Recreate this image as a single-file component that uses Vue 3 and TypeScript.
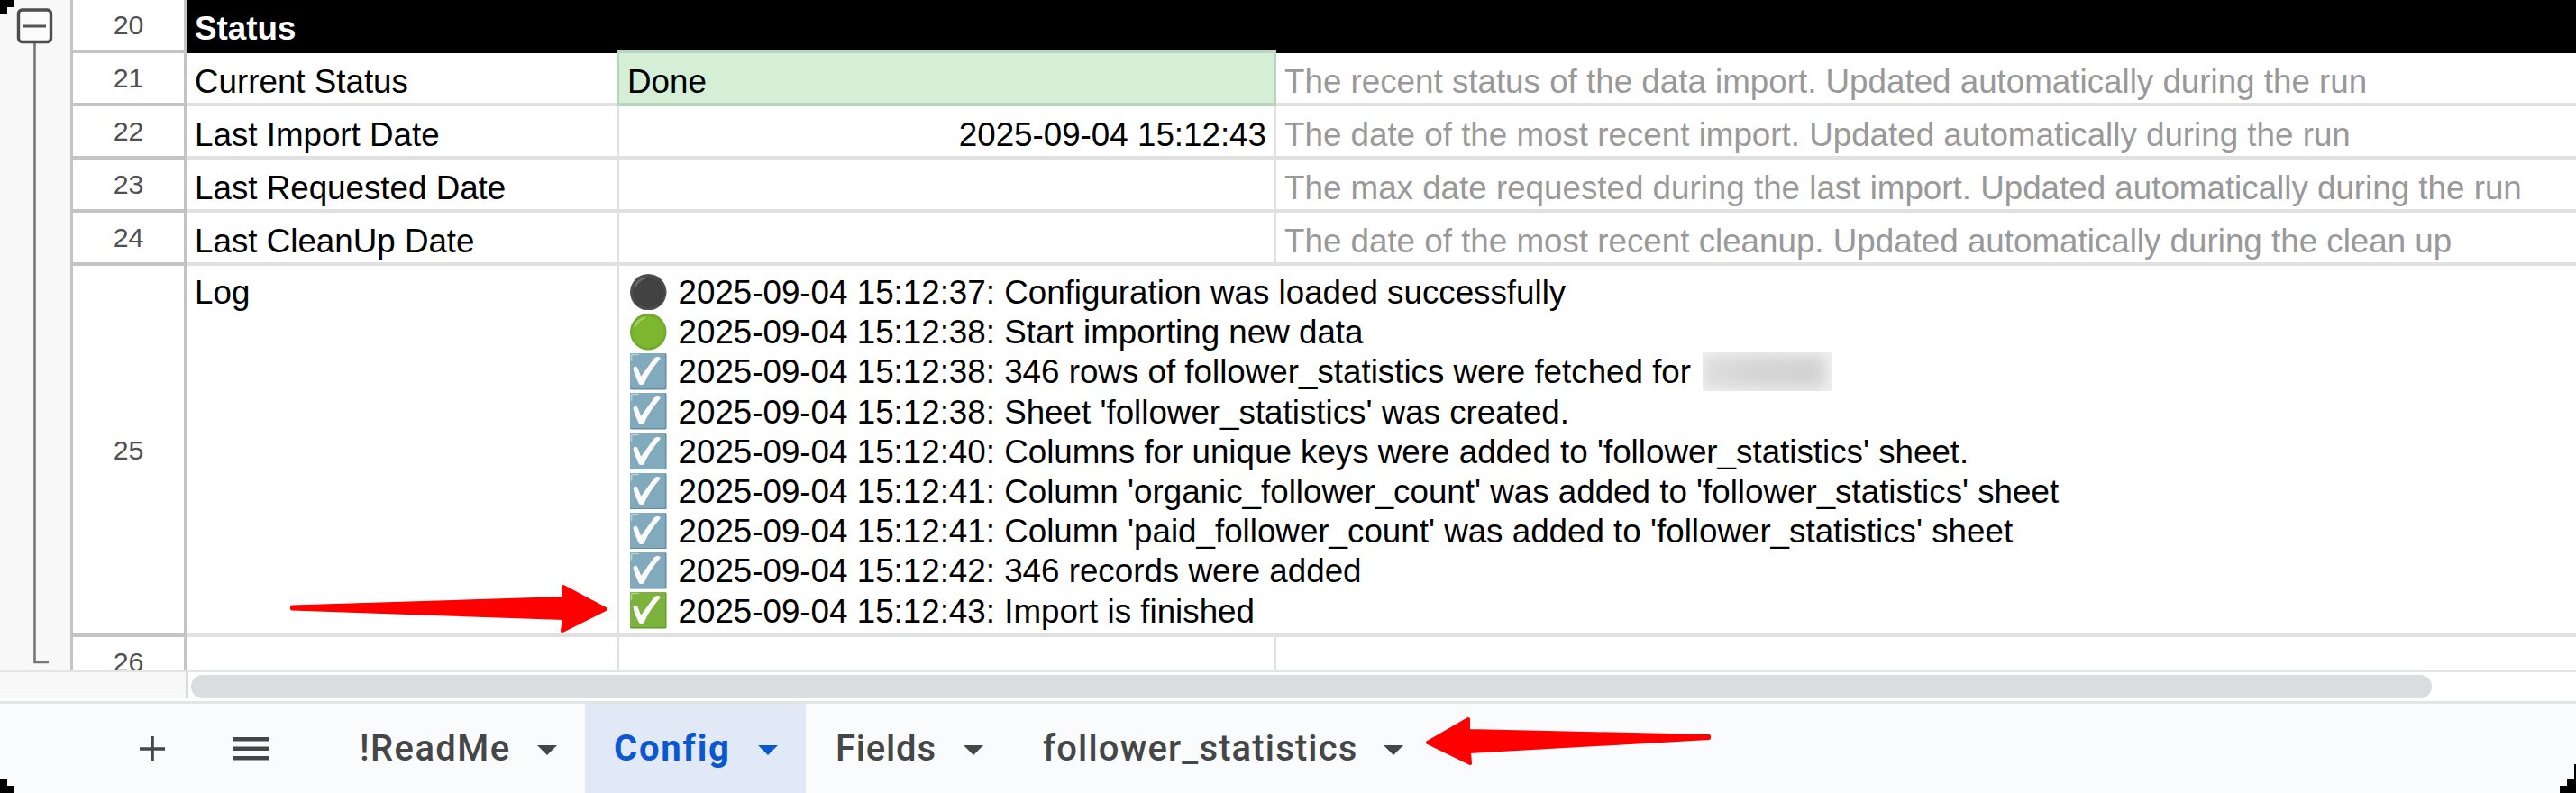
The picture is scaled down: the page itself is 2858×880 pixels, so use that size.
<script setup lang="ts">
interface Row { n: number; label: string; value?: string; note?: string; kind?: string }
interface LogLine { icon: 'dark' | 'green' | 'blue' | 'done'; text: string; redacted?: boolean }
interface Tab { name: string; key: string; active?: boolean }

const rows: Row[] = [
  { n: 21, label: 'Current Status', value: 'Done', note: 'The recent status of the data import. Updated automatically during the run', kind: 'done' },
  { n: 22, label: 'Last Import Date', value: '2025-09-04 15:12:43', note: 'The date of the most recent import. Updated automatically during the run', kind: 'right' },
  { n: 23, label: 'Last Requested Date', note: 'The max date requested during the last import. Updated automatically during the run' },
  { n: 24, label: 'Last CleanUp Date', note: 'The date of the most recent cleanup. Updated automatically during the clean up' },
]
const log: LogLine[] = [
  { icon: 'dark', text: '2025-09-04 15:12:37: Configuration was loaded successfully' },
  { icon: 'green', text: '2025-09-04 15:12:38: Start importing new data' },
  { icon: 'blue', text: '2025-09-04 15:12:38: 346 rows of follower_statistics were fetched for', redacted: true },
  { icon: 'blue', text: "2025-09-04 15:12:38: Sheet 'follower_statistics' was created." },
  { icon: 'blue', text: "2025-09-04 15:12:40: Columns for unique keys were added to 'follower_statistics' sheet." },
  { icon: 'blue', text: "2025-09-04 15:12:41: Column 'organic_follower_count' was added to 'follower_statistics' sheet" },
  { icon: 'blue', text: "2025-09-04 15:12:41: Column 'paid_follower_count' was added to 'follower_statistics' sheet" },
  { icon: 'blue', text: '2025-09-04 15:12:42: 346 records were added' },
  { icon: 'done', text: '2025-09-04 15:12:43: Import is finished' },
]
const tabs: Tab[] = [
  { name: '!ReadMe', key: 'readme' },
  { name: 'Config', key: 'config', active: true },
  { name: 'Fields', key: 'fields' },
  { name: 'follower_statistics', key: 'stats' },
]
</script>

<template>
  <div class="app">
    <svg class="defs" width="0" height="0">
      <defs>
        <radialGradient id="g-dark" cx=".5" cy=".5" r=".5"><stop offset=".8" stop-color="#424242" /><stop offset="1" stop-color="#535353" /></radialGradient>
        <radialGradient id="g-green" cx=".5" cy=".5" r=".5"><stop offset=".8" stop-color="#7cb72f" /><stop offset="1" stop-color="#6ba329" /></radialGradient>
      </defs>
    </svg>

    <div class="sheet">
      <div class="outline">
        <svg width="77" height="743" viewBox="0 0 77 743" fill="none">
          <path d="M38.500 47V735H54" stroke="#777" stroke-width="2.6" />
          <rect x="20.500" y="11" width="36" height="35.500" rx="4" fill="#fbfbfb" stroke="#4d4d4d" stroke-width="3.4" />
          <path d="M26 29H51" stroke="#555" stroke-width="3" />
        </svg>
      </div>
      <div class="grid">
        <div class="row">
          <div class="num">20</div>
          <div class="band">Status</div>
        </div>
        <div v-for="r in rows" :key="r.n" class="row">
          <div class="num">{{ r.n }}</div>
          <div class="cell a">{{ r.label }}</div>
          <div class="cell b" :class="r.kind">{{ r.value }}</div>
          <div class="cell c">{{ r.note }}</div>
        </div>
        <div class="row tall">
          <div class="num">25</div>
          <div class="cell a">Log</div>
          <div class="log">
            <div v-for="(l, i) in log" :key="i" class="line">
              <svg class="emoji" viewBox="0 0 40 40">
                <template v-if="l.icon === 'dark' || l.icon === 'green'">
                  <circle cx="20" cy="20" r="20" :fill="l.icon === 'dark' ? 'url(#g-dark)' : 'url(#g-green)'" />
                  <path d="M5.500 14C7.500 9 11 5.800 16 4.500" fill="none" :stroke="l.icon === 'dark' ? '#6c6c6c' : '#a5d268'" stroke-width="2.4" stroke-linecap="round" />
                </template>
                <template v-else>
                  <rect width="40" height="40" rx="1.6" :fill="l.icon === 'blue' ? '#5f8da3' : '#5f9b28'" />
                  <rect width="38.600" height="38.400" rx="1.4" :fill="l.icon === 'blue' ? '#82aabd' : '#7cb33c'" />
                  <path d="M1.500 8V3Q1.500 1.500 3 1.500H9" fill="none" :stroke="l.icon === 'blue' ? '#b3d0db' : '#b0d77c'" stroke-width="1.6" stroke-linecap="round" />
                  <path d="M3.500 17C3.500 14 7.500 13.500 8.500 16.500L12 25.500L26.500 5.500C28.500 3 34.500 3.500 33 6.500C25.500 15 19.500 24 15.500 33C14.500 35.200 10.500 35.200 9.500 33C7 27.500 4.500 22 3.500 17Z" fill="#fafafa" />
                </template>
              </svg>
              <span class="text">{{ l.text }}</span>
              <span v-if="l.redacted" class="redacted"></span>
            </div>
          </div>
        </div>
        <div class="row">
          <div class="num">26</div>
          <div class="cell a"></div>
          <div class="cell b"></div>
          <div class="cell c"></div>
        </div>
      </div>
    </div>

    <div class="scroll">
      <div class="corner"></div>
      <div class="thumb"></div>
    </div>

    <div class="tabs">
      <svg class="plus" viewBox="0 0 28 28"><path d="M14 0V28M0 14H28" stroke="#444746" stroke-width="3.6" /></svg>
      <svg class="menu" viewBox="0 0 40 26"><path d="M0 2.300H40M0 12.800H40M0 23.300H40" stroke="#444746" stroke-width="4.4" /></svg>
      <div v-for="t in tabs" :key="t.key" class="tab" :class="[t.key, { active: t.active }]">
        <span>{{ t.name }}</span>
        <svg class="caret" viewBox="0 0 22 11"><path d="M0 0H22L11 11Z" fill="currentColor" /></svg>
      </div>
    </div>

    <svg class="overlay" viewBox="0 0 2858 880">
      <g fill="#f00" stroke="#f00" stroke-width="4" stroke-linejoin="round">
        <path d="M324 673.500L626 664L625 651L672 676L624 700L626 686L324 675.500Z" />
        <path d="M1896 817L1629 811L1629 798L1584 824L1631 847L1630 834L1896 819Z" />
      </g>
      <g fill="#000" shape-rendering="crispEdges">
        <path d="M0 0H16V8H8V16H0Z" />
        <path d="M0 864H8V872H16V880H0Z" />
        <path d="M2858 848H2856V864H2848V872H2840V880H2858Z" />
      </g>
    </svg>
  </div>
</template>

<style>
body { margin: 0; overflow: hidden; }
</style>

<style scoped>
.app { position: relative; width: 2858px; height: 880px; overflow: hidden; background: #fff; color: #000; font-family: "Liberation Sans", Arial, sans-serif; display: flex; flex-direction: column; }
.app * { box-sizing: border-box; }
.defs { position: absolute; }
.sheet { display: flex; height: 743px; overflow: hidden; }
.outline { width: 81px; border-right: 3px solid #c4c4c4; background: #f8f8f8; flex: none; }
.outline svg { display: block; }
.grid { flex: 1; min-width: 0; }
.row { display: flex; height: 59px; font-size: 36.75px; line-height: 42px; white-space: nowrap; }
.num { width: 127px; flex: none; border-right: 4px solid #c4c4c4; border-bottom: 4px solid #c4c4c4; font-size: 30.3px; color: #505050; text-align: center; line-height: 54px; padding-top: 1px; }
.band { flex: 1; background: #000; color: #fff; font-weight: 700; padding: 11px 0 0 8px; }
.cell { border-bottom: 4px solid #e1e1e1; border-right: 3px solid #e1e1e1; padding-top: 11px; }
.a { width: 479px; padding-left: 8px; }
.b { width: 729px; padding-left: 9px; }
.c { flex: 1; border-right: 0; padding-left: 9px; color: #999; }
.b.done { background: #d5efd7; border: solid #b9d3bf; border-width: 4px 3px; margin: -4px 0 0 -3px; width: 732px; height: 63px; padding-left: 9px; position: relative; }
.b.right { text-align: right; padding-right: 8px; }
.tall { height: 412px; }
.tall .num { line-height: 407px; }
.tall .a { padding-top: 9px; }
.log { flex: 1; border-bottom: 4px solid #e1e1e1; padding: 7px 0 0 12px; }
.line { height: 44.2px; display: flex; align-items: center; }
.text { padding-top: 2px; }
.emoji { width: 40.5px; height: 40.5px; margin-right: 13px; flex: none; }
.redacted { width: 143px; height: 43px; margin-left: 13px; background: linear-gradient(90deg, #dedede, #d5d5d5 40%, #d2d2d2); box-shadow: inset -4px 0 16px 3px #f2f2f2; }
.scroll { height: 38px; border-top: 3px solid #e3e5e5; border-bottom: 3px solid #e3e5e5; display: flex; }
.corner { width: 209px; border-right: 3px solid #d9d9d9; background: #f8f8f8; height: 29px; }
.thumb { width: 2486px; height: 26px; margin: 3px 0 0 3px; border-radius: 13px; background: #dadce0; }
.tabs { flex: 1; background: #f9fbfd; display: flex; align-items: center; color: #444746; }
.plus { width: 28px; height: 28px; margin-left: 155px; }
.menu { width: 40px; height: 26px; margin-left: 75px; }
.tab { height: 99px; flex: none; display: flex; align-items: center; justify-content: space-between; font: 500 40px Roboto, sans-serif; }
.caret { width: 22px; height: 11px; margin-top: 4px; }
.tab.active { color: #0b57d0; background: #e1e9f7; font-weight: 700; }
.readme { margin-left: 101px; width: 250px; padding-right: 31px; letter-spacing: 1.4px; }
.config { width: 245px; padding: 0 31px 0 32px; letter-spacing: 1.8px; }
.fields { width: 230px; padding: 0 33px; letter-spacing: .8px; }
.stats { width: 466px; padding: 0 33px; letter-spacing: 1.15px; }
.overlay { position: absolute; inset: 0; width: 2858px; height: 880px; pointer-events: none; }
</style>
